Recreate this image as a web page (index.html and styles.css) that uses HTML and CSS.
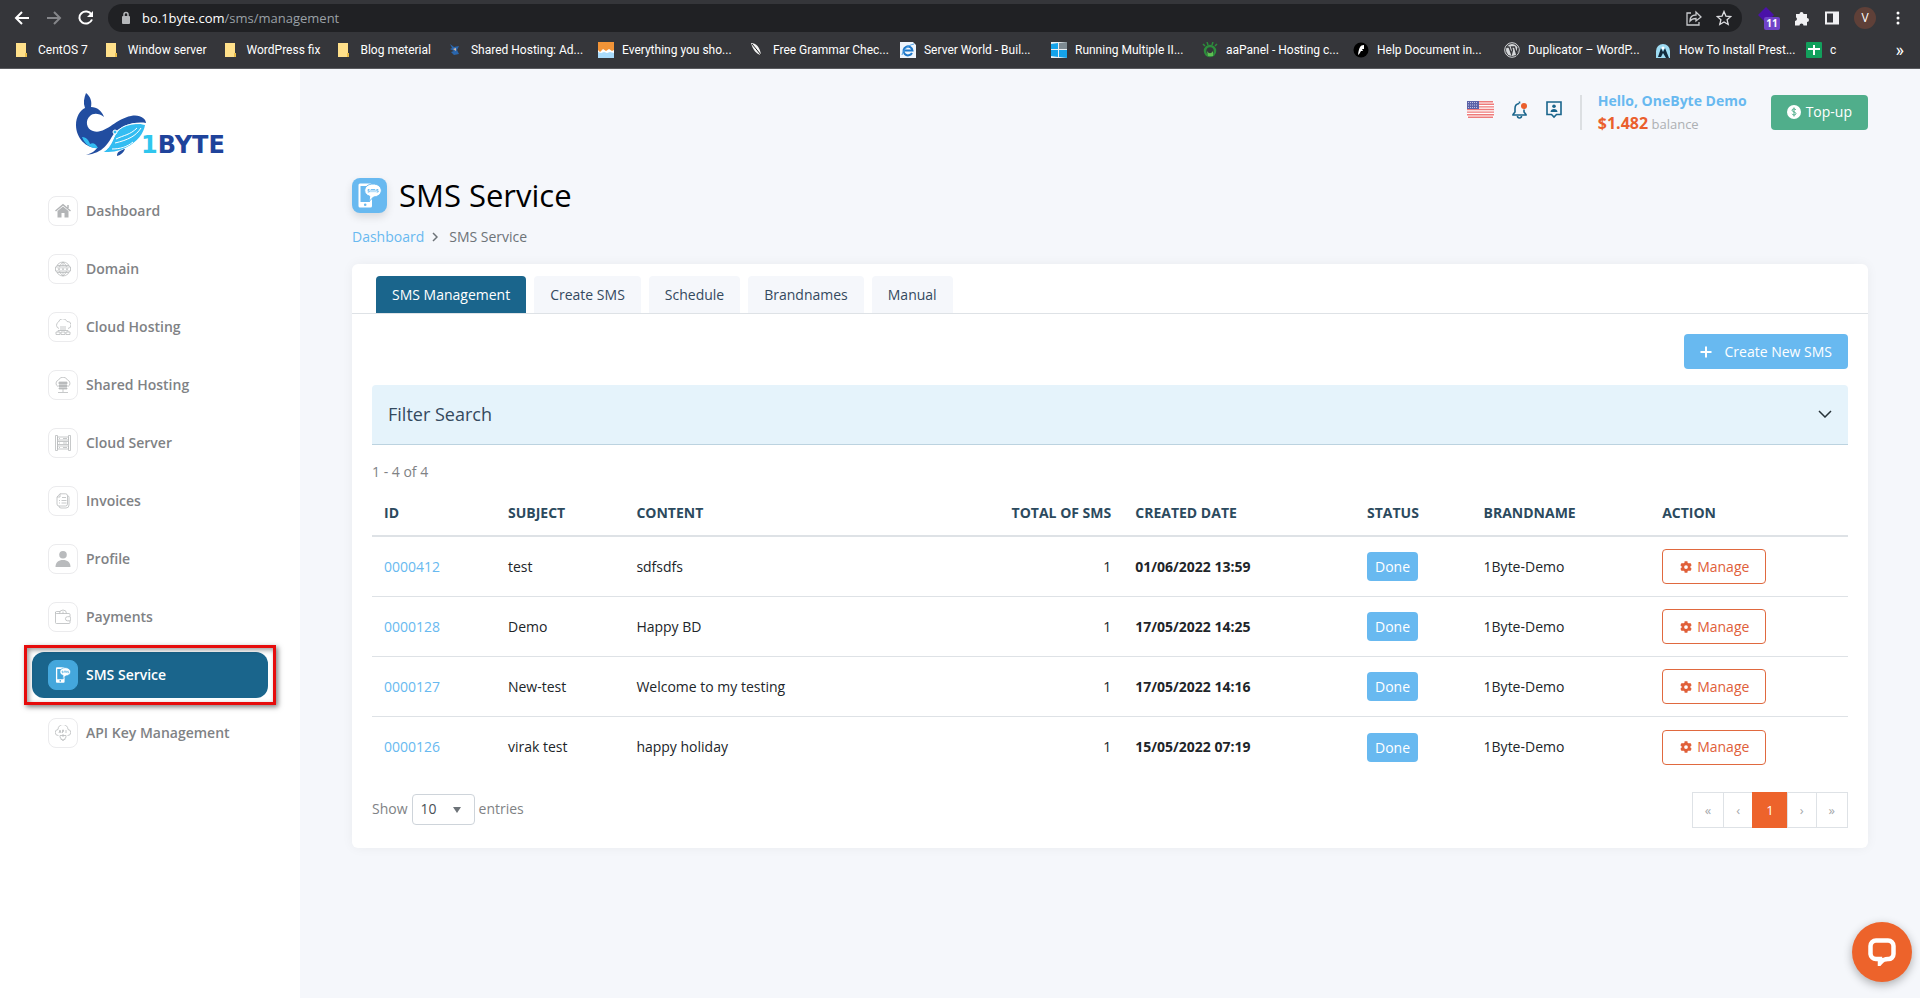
FILE: index.html
```html
<!DOCTYPE html>
<html lang="en">
<head>
    <meta charset="UTF-8">
    <meta name="viewport" content="width=device-width, initial-scale=1.0">
    <title>SMS Service</title>
    <link rel="stylesheet" href="styles.css">
</head>
<body>
    <!-- shared icons -->
    <svg class="sprite" aria-hidden="true">
        <symbol id="folder" viewBox="0 0 16 16"><path d="M2 1h10v10l1 1v3H2z" fill="#ffe08a"/><path d="M11 11h2v4h-2z" fill="#e9bd4a"/></symbol>
        <symbol id="gear" viewBox="0 0 512 512"><path fill="currentColor" d="M487 315l-42-25c4-23 4-46 0-69l42-25c5-3 7-8 6-14-11-35-30-67-55-94-4-4-10-5-14-2l-43 24c-18-15-39-27-61-35V27c0-6-4-11-9-12-36-8-73-8-109 0-5 1-9 6-9 12v48c-22 8-43 20-61 35L89 86c-5-3-11-2-14 2-25 27-44 59-55 94-2 5 0 11 5 14l43 25c-4 23-4 46 0 69l-43 25c-5 3-7 8-5 14 11 35 30 67 55 94 4 4 10 5 14 2l43-24c18 15 39 27 61 35v48c0 6 4 11 9 12 36 8 73 8 109 0 5-1 9-6 9-12v-48c22-8 43-20 61-35l43 24c5 3 11 2 14-2 25-27 44-59 55-94 1-6-1-11-6-14zM256 336a80 80 0 1 1 0-160 80 80 0 0 1 0 160z"/></symbol>
        <symbol id="sms" viewBox="0 0 25 25">
            <path fill="#fff" fill-rule="evenodd" d="M3 .5h10.500a1.500 1.500 0 0 1 1.500 1.500v21a1.500 1.500 0 0 1-1.500 1.500H3A1.500 1.500 0 0 1 1.500 23V2A1.500 1.500 0 0 1 3 .5zM3.500 3v16H13V3zM8.200 20.500a1.300 1.300 0 1 0 0 2.600 1.300 1.300 0 0 0 0-2.600z"/>
            <path fill="#fff" stroke="currentColor" d="M16 1c4.700 0 8.300 2.700 8.300 6.500S21 13.700 16.500 14L12 18.500l.7-5.300C9.500 12.300 7.700 10.300 7.700 7.500 7.700 3.700 11.300 1 16 1z"/>
            <path fill="none" stroke="currentColor" stroke-width=".9" d="M12.500 6.500H11v1.300h1.300V9H10.700M14 9.200V6.500h4v2.700M16 6.500v2.700M21.300 6.500h-1.600v1.300h1.500V9h-1.700"/>
        </symbol>
    </svg>

    <header class="browser">
        <div class="toolbar">
            <div class="history">
                <button class="tool" aria-label="Back"><svg viewBox="0 0 16 16" width="16" height="16"><path d="M15 8H2M8 2L2 8l6 6" fill="none" stroke="#fff" stroke-width="2"/></svg></button>
                <button class="tool" aria-label="Forward"><svg viewBox="0 0 16 16" width="16" height="16"><path d="M1 8h13M8 2l6 6-6 6" fill="none" stroke="#85868a" stroke-width="2"/></svg></button>
                <button class="tool" aria-label="Reload"><svg viewBox="0 0 16 16" width="16" height="16"><path d="M13.500 4.500A6.500 6 0 1 0 14 9.500" fill="none" stroke="#fff" stroke-width="2"/><path d="M15 1v6H9z" fill="#fff"/></svg></button>
            </div>
            <div class="address">
                <svg viewBox="0 0 12 14" width="12" height="14"><rect x="2" y="5" width="8" height="8" rx="1" fill="#b5b7ba"/><path d="M4 6V3.500a2 2 0 0 1 4 0V6" fill="none" stroke="#b5b7ba" stroke-width="1.500"/></svg>
                <span class="url">bo.1byte.com<span>/sms/management</span></span>
                <button class="tool" aria-label="Share"><svg viewBox="0 0 16 16" width="16" height="16"><path d="M5 3H1v12h12v-3M4 11c0-4 2-6 6-6V2l5 5-5 4V8.500C7 8.500 5.500 9 4 11z" fill="none" stroke="#c9cbce" stroke-width="1.300"/></svg></button>
                <button class="tool" aria-label="Bookmark"><svg viewBox="0 0 16 16" width="16" height="16"><path d="M8 1.500l1.900 4.600 4.900.4-3.700 3.200 1.100 4.800L8 12l-4.200 2.500 1.100-4.800L1.200 6.500l4.900-.4z" fill="none" stroke="#dcdde0" stroke-width="1.300"/></svg></button>
            </div>
            <button class="tool" aria-label="Extension"><svg viewBox="0 0 24 24" width="24" height="24"><path d="M10 1l8 8-8 8-8-8z" fill="#4a11a8"/><rect x="8" y="11" width="16" height="13" rx="2" fill="#7043c8"/><text x="16" y="21" class="ext-count">11</text></svg></button>
            <button class="tool" aria-label="Extensions"><svg viewBox="0 0 16 16" width="16" height="16"><path d="M2 4h3.500a2 2 0 1 1 4 0H13v4a2 2 0 1 1 0 4v3.500H9.500a2 2 0 0 0-4 0H1V11a2 2 0 0 0 1-3.700z" fill="#f1f1f3"/></svg></button>
            <button class="tool" aria-label="Side panel"><svg viewBox="0 0 16 16" width="16" height="16"><path d="M1 1.500h14v13H1zM3 3.500v9h6v-9z" fill="#f1f1f3" fill-rule="evenodd"/></svg></button>
            <button class="avatar" aria-label="Account">V</button>
            <button class="tool" aria-label="Menu"><svg viewBox="0 0 16 16" width="16" height="16" fill="#fff"><circle cx="8" cy="3" r="1.500"/><circle cx="8" cy="8" r="1.500"/><circle cx="8" cy="13" r="1.500"/></svg></button>
        </div>
        <nav class="bookmarks">
            <a href="#"><svg><use href="#folder"/></svg>CentOS 7</a>
            <a href="#"><svg><use href="#folder"/></svg>Window server</a>
            <a href="#"><svg><use href="#folder"/></svg>WordPress fix</a>
            <a href="#"><svg><use href="#folder"/></svg>Blog meterial</a>
            <a href="#" class="long"><svg viewBox="0 0 16 16"><path d="M3 2l4 3 5-1-2 4 2 4-5 1-3-3 3-1-4-2 2-1z" fill="#2a66ad"/><path d="M6 7l3-1v3z" fill="#d9b9a0"/></svg>Shared Hosting: Ad...</a>
            <a href="#" class="long"><svg viewBox="0 0 16 16"><path d="M0 0h16v16H0z" fill="#f29437"/><path d="M0 8l2 2 3-3 3 2 3-2 3 2 2-1v8H0z" fill="#fff"/><path d="M0 10l3 1 3-1 3 1 3-1 4 1v5H0z" fill="#a9dbfb"/></svg>Everything you sho...</a>
            <a href="#" class="long"><svg viewBox="0 0 16 16"><path d="M2 1c5 0 9 4 10 12C7 12 4 8 2 1z" fill="#f4f4f4"/><path d="M3 2l9 11" stroke="#222" fill="none"/></svg>Free Grammar Chec...</a>
            <a href="#" class="long"><svg viewBox="0 0 16 16"><path d="M0 0h13l3 3v13H0z" fill="#eef4fb"/><path d="M12 11A4.500 4.500 0 1 1 12.500 8.500H4" fill="none" stroke="#1e77c8" stroke-width="2"/><path d="M2 13C3 8 8 3 14 2" fill="none" stroke="#4b9fe6"/></svg>Server World - Buil...</a>
            <a href="#" class="long"><svg viewBox="0 0 16 16"><path d="M0 0h16v16H0z" fill="#e9eef2"/><path d="M0 2l7-1v6H0zM8 8h8v8l-8-1zM0 8h7v7l-7-1z" fill="#15a3ea"/><path d="M8 1l8-1v7H8z" fill="#7d8a92"/></svg>Running Multiple II...</a>
            <a href="#" class="long"><svg viewBox="0 0 16 16"><circle cx="8" cy="9" r="5" fill="none" stroke="#2d8d3c" stroke-width="2.500"/><path d="M3 4L1 2M6 3L5 0M10 3l1-3M13 4l2-2" stroke="#2d8d3c" stroke-width="1.500"/><path d="M5 9c2 3 4 3 6 0v5H6z" fill="#5fbf52"/></svg>aaPanel - Hosting c...</a>
            <a href="#" class="long"><svg viewBox="0 0 16 16"><circle cx="8" cy="8" r="7.500" fill="#000"/><path d="M11 3C7 3 6 6 5 13c2-1 2-3 3-4h2l-1-2h2z" fill="#fff"/></svg>Help Document in...</a>
            <a href="#" class="long"><svg viewBox="0 0 16 16"><circle cx="8" cy="8" r="7.300" fill="none" stroke="#d5d7d9"/><circle cx="8" cy="8" r="6" fill="#d5d7d9"/><path d="M2 5h3l2.500 7L8.500 8 7.500 5h3l2 7L14 6" fill="none" stroke="#35363a" stroke-width="1.300"/></svg>Duplicator – WordP...</a>
            <a href="#" class="long"><svg viewBox="0 0 16 16"><path d="M1 16V9a7 7 0 0 1 14 0v7z" fill="#9edcf3"/><path d="M3 15l3-9 2 4 2-4 4 10h-3l-3-5-2 4z" fill="#112a3c"/><circle cx="8" cy="6" r="1.500" fill="#fff"/></svg>How To Install Prest...</a>
            <a href="#"><svg viewBox="0 0 16 16"><rect width="16" height="16" rx="1" fill="#12a05c"/><path d="M7 3h2v3h5v2H9v5H7V8H2V6h5z" fill="#fff"/></svg>c</a>
            <button class="more" aria-label="More bookmarks">»</button>
        </nav>
    </header>

    <div class="layout">
        <aside class="sidebar">
            <a href="#" class="logo" aria-label="1Byte">
                <svg viewBox="0 0 156 68" width="156" height="68">
                    <path fill="#214da0" d="M10 0c5 4 6 9 5 14 6 0 11 4 13 10-5-4-11-4-14-1-5 4-4 13 3 15 12 4 22-12 38-15 9-2 15 3 15 7-12-2-27 3-33 12-5 8-9 18-27 20 6-2 9-4 11-7C10 55 0 45 0 32c0-8 4-15 9-17C7 10 8 5 10 0z"/>
                    <path fill="#33bdf2" d="M69 32c-1 8-8 17-18 22-9 5-17 5-24 5 9-5 10-14 13-19 6-9 19-11 29-8zM6 44c5 0 7 4 8 7 3-2 6 0 8 4-6 1-13-3-16-11z"/>
                    <path fill="#214da0" d="M48 56c-3 2-7 2-7 7 4-1 7-4 8-7z"/>
                    <path fill="none" stroke="#fff" stroke-width="1" d="M70 31c-14-2-27 2-31 11-3 6-5 13-12 17M65 35c-5 8-13 12-26 15M61 35c-7 7-13 7-21 11M57 49c-6 5-13 7-21 7"/>
                    <circle cx="39" cy="39" r="2" fill="#33bdf2" stroke="#fff"/>
                    <text x="65" y="60" class="logo-text"><tspan class="one">1</tspan>BYTE</text>
                </svg>
            </a>
            <nav class="menu">
                <a href="#"><span class="menu-icon"><svg viewBox="0 0 16 16"><path d="M8 3.500L2.500 8v6.500h4V10h3v4.500h4V8z" fill="#b3b5b7"/><path d="M.5 8L8 1.700 15.500 8M13 5V2" fill="none" stroke="#b3b5b7" stroke-width="1.500"/></svg></span>Dashboard</a>
                <a href="#"><span class="menu-icon"><svg viewBox="0 0 16 16" class="line"><circle cx="8" cy="8" r="7"/><path d="M8 1C3 5 3 11 8 15M8 1c5 4 5 10 0 14M8 1v4M8 11v4M2 4.500h12M2 11.500h12"/><path d="M.5 6h15v4H.5z" fill="#fff"/><path d="M3 7l1 2 1-2M7 7l1 2 1-2M11 7l1 2 1-2"/></svg></span>Domain</a>
                <a href="#"><span class="menu-icon"><svg viewBox="0 0 16 16" class="line"><path d="M4 9.500a3.500 3.500 0 0 1-.5-6.500 4.500 4.500 0 0 1 8.500-.5 3.500 3.500 0 0 1 1 7M6 7v5M8 7v5M10 7v5M3 13v-1.500h10V13"/><path d="M1 13h4v2.500H1zM6 13h4v2.500H6zM11 13h4v2.500h-4z"/></svg></span>Cloud Hosting</a>
                <a href="#"><span class="menu-icon"><svg viewBox="0 0 16 16" class="line"><path d="M3 9.500a3.500 3.500 0 0 1 .5-6.500 5 5 0 0 1 9 0 3.500 3.500 0 0 1 .5 6.500"/><path d="M4 5h8v2H4zM4 8h8v2H4zM4 11h8v1H4z" fill="#b9bbbd"/><path d="M8 12v3M3 15.500h10"/></svg></span>Shared Hosting</a>
                <a href="#"><span class="menu-icon"><svg viewBox="0 0 16 16" class="line"><path d="M.5.5h2v15h-2zM13.500.5h2v15h-2z"/><path d="M2.500 2h11v3h-11zM2.500 6.500h11v3h-11zM2.500 11h11v3h-11zM4 3.500h1M8 3.500h4M4 8h1M8 8h4M4 12.500h1M8 12.500h4"/></svg></span>Cloud Server</a>
                <a href="#"><span class="menu-icon"><svg viewBox="0 0 16 16" class="line"><path d="M5 .8h5.500a2 2 0 0 1 2 2V11a2 2 0 0 1-2 2H4a2 2 0 0 1-2-2V4zM5 .8V4H2M12.500 2.500a2 2 0 0 1 1.500 2V12a3 3 0 0 1-3 3H6a2 2 0 0 1-2-2M7 4.500h4M6.500 7.500h5M6.500 10h5M4 7.500h1M4 10h1"/></svg></span>Invoices</a>
                <a href="#"><span class="menu-icon"><svg viewBox="0 0 16 16" fill="#b9bbbd"><circle cx="8" cy="3.800" r="3.800"/><path d="M.5 16c0-4.500 3-7 7.500-7s7.500 2.500 7.500 7z"/></svg></span>Profile</a>
                <a href="#"><span class="menu-icon"><svg viewBox="0 0 16 16" class="line"><path d="M15 7.500V5.500a1 1 0 0 0-1-1H1.500a1 1 0 0 1 0-2H5M.5 3v10.500a1 1 0 0 0 1 1H14a1 1 0 0 0 1-1V12"/><path d="M12.500 7.700H15a1 1 0 0 1 .7 1V11a1 1 0 0 1-.7.800h-2.500a2 2 0 0 1 0-4.100zM4.500 4.500a3.500 3.500 0 0 1 7 0M8 2.500v2"/></svg></span>Payments</a>
                <a href="#" class="active"><span class="menu-icon"><svg><use href="#sms"/></svg></span>SMS Service</a>
                <a href="#"><span class="menu-icon"><svg viewBox="0 0 16 16" class="line"><path d="M3.500 10.500a3 3 0 0 1-.5-6 5 5 0 0 1 10 0 3 3 0 0 1-.5 6"/><path d="M4 8l1-3 1 3M4.500 7h1M7.500 8V5h1v1.500h-1M11 5v3"/><path d="M5 10.500h6v2l-1 .5v1.500H8.500v1h-1v-1H6V13l-1-.5zM8 9v3"/></svg></span>API Key Management</a>
            </nav>
        </aside>

        <main class="main">
            <div class="topbar">
                <button class="icon-btn flag" aria-label="Language">
                    <svg viewBox="0 0 27 17" width="27" height="17"><rect width="27" height="17" rx="2" fill="#fff"/><path d="M1 .7h25M0 3.300h27M0 5.900h27M0 8.500h27M0 11.100h27M0 13.700h27M1 16.300h25" stroke="#ee7b7b" stroke-width="1.400"/><path d="M0 0h12v8H0z" fill="#5a62a8"/><path d="M1 1.500h10M1 4h10M1 6.500h10" stroke="#c3c6e2" stroke-dasharray="1 1"/></svg>
                </button>
                <button class="icon-btn" aria-label="Notifications">
                    <svg viewBox="0 0 16 18" width="16" height="18"><path d="M7 2.500c-3 .5-4 2.500-4 5V11l-2 2.500v.5h13v-.5L12 11V8.500M5.500 15a2 2 0 0 0 4 0M7.500.5v2" fill="none" stroke="#1a658c" stroke-width="1.600"/><circle cx="12" cy="5" r="3" fill="#ea5f2d"/></svg>
                </button>
                <button class="icon-btn" aria-label="Contact">
                    <svg viewBox="0 0 16 18" width="16" height="18"><path d="M1 1h14v12.500h-4.500L8 16l-2.500-2.500H1z" fill="none" stroke="#1a658c" stroke-width="1.600"/><circle cx="8" cy="5.300" r="1.800" fill="#1a658c"/><path d="M4.500 11c0-4 7-4 7 0z" fill="#1a658c"/></svg>
                </button>
                <span class="divider"></span>
                <div class="account">
                    <a href="#" class="hello">Hello, OneByte Demo</a>
                    <div><strong>$1.482</strong> <span>balance</span></div>
                </div>
                <button class="btn topup"><svg viewBox="0 0 14 14" width="14" height="14"><circle cx="7" cy="7" r="7" fill="#fff"/><path d="M9 5c-.5-1.500-4-1.500-4 .2C5 7.200 9 6.600 9 8.700c0 1.700-3.600 1.700-4 .1M7 2.500v9" fill="none" stroke="#50ae8b"/></svg>Top-up</button>
            </div>

            <div class="page-title">
                <span class="title-icon"><svg><use href="#sms"/></svg></span>
                <h1>SMS Service</h1>
            </div>
            <nav class="breadcrumb">
                <a href="#">Dashboard</a>
                <svg viewBox="0 0 6 10" width="6" height="10"><path d="M1 1l4 4-4 4" fill="none" stroke="#6d7378" stroke-width="1.500"/></svg>
                <span>SMS Service</span>
            </nav>

            <section class="card">
                <nav class="tabs">
                    <a href="#" class="active">SMS Management</a>
                    <a href="#">Create SMS</a>
                    <a href="#">Schedule</a>
                    <a href="#">Brandnames</a>
                    <a href="#">Manual</a>
                </nav>
                <div class="card-body">
                    <div class="actions">
                        <button class="btn create"><svg viewBox="0 0 12 12" width="12" height="12"><path d="M6 .5v11M.5 6h11" stroke="#fff" stroke-width="2"/></svg>Create New SMS</button>
                    </div>
                    <button class="filter">Filter Search
                        <svg viewBox="0 0 14 8" width="14" height="8"><path d="M1 1l6 6 6-6" fill="none" stroke="#263238" stroke-width="1.500"/></svg>
                    </button>
                    <p class="count">1 - 4 of 4</p>
                    <table>
                        <thead>
                            <tr>
                                <th class="col-id">ID</th>
                                <th class="col-subject">SUBJECT</th>
                                <th class="col-content">CONTENT</th>
                                <th class="col-total">TOTAL OF SMS</th>
                                <th class="col-date">CREATED DATE</th>
                                <th class="col-status">STATUS</th>
                                <th class="col-brand">BRANDNAME</th>
                                <th class="col-action">ACTION</th>
                            </tr>
                        </thead>
                        <tbody>
                            <tr>
                                <td><a href="#">0000412</a></td><td>test</td><td>sdfsdfs</td>
                                <td class="col-total">1</td><td class="date">01/06/2022 13:59</td>
                                <td><span class="badge">Done</span></td><td>1Byte-Demo</td>
                                <td><button class="btn manage"><svg><use href="#gear"/></svg>Manage</button></td>
                            </tr>
                            <tr>
                                <td><a href="#">0000128</a></td><td>Demo</td><td>Happy BD</td>
                                <td class="col-total">1</td><td class="date">17/05/2022 14:25</td>
                                <td><span class="badge">Done</span></td><td>1Byte-Demo</td>
                                <td><button class="btn manage"><svg><use href="#gear"/></svg>Manage</button></td>
                            </tr>
                            <tr>
                                <td><a href="#">0000127</a></td><td>New-test</td><td>Welcome to my testing</td>
                                <td class="col-total">1</td><td class="date">17/05/2022 14:16</td>
                                <td><span class="badge">Done</span></td><td>1Byte-Demo</td>
                                <td><button class="btn manage"><svg><use href="#gear"/></svg>Manage</button></td>
                            </tr>
                            <tr>
                                <td><a href="#">0000126</a></td><td>virak test</td><td>happy holiday</td>
                                <td class="col-total">1</td><td class="date">15/05/2022 07:19</td>
                                <td><span class="badge">Done</span></td><td>1Byte-Demo</td>
                                <td><button class="btn manage"><svg><use href="#gear"/></svg>Manage</button></td>
                            </tr>
                        </tbody>
                    </table>
                    <div class="table-footer">
                        <div class="entries">
                            <label for="perPage">Show</label>
                            <span class="select"><select id="perPage"><option>10</option><option>25</option><option>50</option></select></span>
                            <span>entries</span>
                        </div>
                        <nav class="pagination">
                            <a href="#">«</a>
                            <a href="#">‹</a>
                            <a href="#" class="active">1</a>
                            <a href="#">›</a>
                            <a href="#">»</a>
                        </nav>
                    </div>
                </div>
            </section>
        </main>
    </div>

    <button class="chat" aria-label="Chat">
        <svg viewBox="0 0 28 28" width="28" height="28"><path d="M8 2.500h12a5.500 5.500 0 0 1 5.500 5.500v8a5 5 0 0 1-5.500 5c-3.500 0-5 .5-8 4V21H8a5.500 5.500 0 0 1-5.500-5V8A5.500 5.500 0 0 1 8 2.500z" fill="none" stroke="#fff" stroke-width="4.500"/></svg>
    </button>
</body>
</html>
```
FILE: styles.css
```css
* {
    box-sizing: border-box;
}
body {
    margin: 0;
    min-height: 100vh;
    display: flex;
    flex-direction: column;
    font-family: "Open Sans", "Noto Sans", sans-serif;
    font-size: 14px;
    line-height: 20px;
    color: #212529;
    background-color: #f5f7fb;
}
a {
    color: #68b9f0;
    text-decoration: none;
}
button {
    font: inherit;
    padding: 0;
    border: none;
    background: none;
    cursor: pointer;
}
svg {
    display: block;
    flex-shrink: 0;
}
.sprite {
    position: absolute;
    width: 0;
    height: 0;
}

/* browser bar */
.browser {
    background-color: #35363a;
    border-bottom: 1px solid #5a5b5f;
    color: #fff;
}
.toolbar {
    display: flex;
    align-items: center;
    gap: 14px;
    height: 36px;
    padding: 0 14px;
}
.history {
    display: flex;
    gap: 16px;
}
.tool {
    min-width: 16px;
}
.address {
    flex: 1;
    display: flex;
    align-items: center;
    gap: 14px;
    height: 28px;
    padding: 0 10px 0 12px;
    border-radius: 14px;
    background-color: #202124;
}
.address > svg {
    margin-right: -4px;
}
.url {
    flex: 1;
    font-size: 13px;
}
.url span {
    color: #9aa0a6;
}
.ext-count {
    font: 700 10px "Open Sans", sans-serif;
    fill: #fff;
    text-anchor: middle;
}
.avatar {
    width: 22px;
    height: 22px;
    border-radius: 50%;
    background-color: #5f4038;
    color: #fff;
    font-size: 12px;
}
.bookmarks {
    display: flex;
    align-items: center;
    gap: 16px;
    height: 32px;
    padding: 0 16px 4px 14px;
    font-family: Roboto, "Open Sans", sans-serif;
    font-size: 12px;
}
.bookmarks a {
    display: flex;
    align-items: center;
    gap: 8px;
    color: #fff;
    white-space: nowrap;
}
.bookmarks svg {
    width: 16px;
    height: 16px;
}
.bookmarks .long {
    width: 135px;
}
.more {
    margin-left: auto;
    color: #fff;
    font-size: 18px;
}

/* sidebar */
.layout {
    flex: 1;
    display: flex;
}
.sidebar {
    width: 300px;
    padding: 24px 32px;
    background-color: #fff;
}
.logo {
    display: block;
    margin: 0 0 27px 44px;
}
.logo-text {
    font: 700 24px "DejaVu Sans", sans-serif;
    fill: #1f439b;
}
.logo-text .one {
    fill: #2fc6ee;
}
.menu {
    display: flex;
    flex-direction: column;
    gap: 12px;
}
.menu a {
    position: relative;
    display: flex;
    align-items: center;
    gap: 8px;
    height: 46px;
    padding: 0 16px;
    border-radius: 12px;
    color: #808285;
    font-weight: 600;
}
.menu-icon {
    display: flex;
    align-items: center;
    justify-content: center;
    width: 30px;
    height: 30px;
    border: 1px solid #ebebed;
    border-radius: 8px;
}
.menu-icon svg {
    width: 16px;
    height: 16px;
}
.line {
    fill: none;
    stroke: #b9bbbd;
    stroke-width: 0.8;
}
.menu .active {
    background-color: #1a658c;
    color: #fff;
}
.active .menu-icon {
    border-color: #44a7dc;
    background-color: #44a7dc;
    color: #44a7dc;
}
.menu .active::after {
    content: "";
    position: absolute;
    inset: -7px -8px;
    border: 3px solid #e60c0c;
    box-shadow: 2px 2px 5px rgba(0, 0, 0, 0.5), inset 2px 2px 5px rgba(0, 0, 0, 0.4);
}

/* content */
.main {
    flex: 1;
    min-width: 0;
    padding: 21px 52px;
}
.topbar {
    display: flex;
    align-items: center;
    justify-content: flex-end;
    height: 44px;
}
.icon-btn {
    margin-right: 18px;
}
.icon-btn svg {
    margin-bottom: 5px;
}
.divider {
    width: 2px;
    height: 35px;
    background-color: #dcdfe2;
}
.account {
    margin: 0 24px 0 16px;
    line-height: 22px;
    font-size: 13px;
    color: #adb0b3;
}
.hello {
    font-size: 14px;
    font-weight: 700;
}
.account strong {
    font-size: 16px;
    color: #ea5f2d;
}
.btn {
    display: inline-flex;
    align-items: center;
    height: 35px;
    padding: 0 16px;
    border-radius: 4px;
    color: #fff;
}
.topup {
    gap: 5px;
    background-color: #50ae8b;
}
.page-title {
    display: flex;
    align-items: center;
    gap: 12px;
    margin-top: 41px;
}
.title-icon {
    display: flex;
    align-items: center;
    justify-content: center;
    width: 35px;
    height: 35px;
    border-radius: 8px;
    background-color: #68b9f0;
    color: #68b9f0;
    box-shadow: 0 4px 8px rgba(0, 0, 0, 0.12);
}
.title-icon svg {
    width: 25px;
    height: 25px;
}
h1 {
    margin: 0;
    font-size: 31px;
    font-weight: 500;
    line-height: 40px;
    color: #000;
}
.breadcrumb {
    display: flex;
    align-items: center;
    gap: 8px;
    margin: 12px 0 17px;
    color: #6d7378;
}
.breadcrumb span {
    margin-left: 3px;
}
.card {
    border-radius: 6px;
    background-color: #fff;
    box-shadow: 0 0 12px rgba(0, 0, 0, 0.05);
}
.tabs {
    display: flex;
    gap: 8px;
    padding: 12px 24px 0;
    border-bottom: 1px solid #dee2e6;
}
.tabs a {
    padding: 9px 16px 8px;
    border-radius: 4px 4px 0 0;
    background-color: #f5f7fb;
    color: #34495e;
}
.tabs .active {
    background-color: #1a658c;
    color: #fff;
}
.card-body {
    padding: 20px;
}
.actions {
    display: flex;
    justify-content: flex-end;
    margin-bottom: 16px;
}
.create {
    gap: 12px;
    background-color: #68b9f0;
}
.filter {
    display: flex;
    align-items: center;
    justify-content: space-between;
    width: 100%;
    height: 60px;
    padding: 0 16px 2px;
    border-bottom: 1px solid #bcd3e0;
    border-radius: 4px 4px 0 0;
    background-color: #e5f3fb;
    color: #34495e;
    font-size: 18px;
}
.count {
    margin: 17px 0;
    color: #808285;
}
table {
    width: 100%;
    table-layout: fixed;
    border-collapse: separate;
    border-spacing: 0;
}
th,
td {
    padding: 0 12px;
    border-bottom: 1px solid #dee2e6;
    text-align: left;
}
th {
    height: 38px;
    padding-bottom: 8px;
    border-bottom-width: 2px;
    color: #2c4a5e;
    white-space: nowrap;
}
td {
    height: 60px;
}
tbody tr:last-child td {
    border-bottom: none;
}
.col-id {
    width: 8.4%;
}
.col-subject {
    width: 8.7%;
}
.col-content {
    width: 25%;
}
.col-total {
    width: 8.8%;
    text-align: right;
}
.col-date {
    width: 15.7%;
}
.col-status {
    width: 7.9%;
}
.col-brand {
    width: 12.1%;
}
.date {
    font-weight: 700;
}
.badge {
    display: inline-block;
    padding: 5px 8px 4px;
    border-radius: 4px;
    background-color: #68b9f0;
    color: #fff;
}
.manage {
    gap: 4px;
    border: 1px solid #e0693f;
    color: #e0603a;
}
.manage svg {
    width: 14px;
    height: 14px;
    padding: 1px;
}
.table-footer {
    display: flex;
    align-items: center;
    justify-content: space-between;
    margin-top: 15px;
    color: #808285;
}
.entries {
    display: flex;
    align-items: center;
    gap: 4px;
    padding-bottom: 2px;
}
.select {
    position: relative;
}
.select select {
    appearance: none;
    width: 63px;
    height: 31px;
    padding: 0 8px;
    border: 1px solid #ced4da;
    border-radius: 4px;
    background-color: #fff;
    color: #495057;
    font: inherit;
}
.select::after {
    content: "";
    position: absolute;
    right: 14px;
    top: 13px;
    border: 4px solid transparent;
    border-top: 6px solid #6d7378;
    pointer-events: none;
}
.pagination {
    display: flex;
    border: 1px solid #dee2e6;
}
.pagination a {
    padding: 7px 12px;
    border-left: 1px solid #dee2e6;
    color: #a5a8ab;
    font-size: 13px;
}
.pagination a:first-child {
    border-left: none;
}
.pagination .active {
    margin: -1px 0;
    padding: 8px 13px;
    border-color: #ed632b;
    background-color: #ed632b;
    color: #fff;
}
.chat {
    position: fixed;
    right: 8px;
    bottom: 16px;
    display: flex;
    align-items: center;
    justify-content: center;
    width: 60px;
    height: 60px;
    border-radius: 50%;
    background-color: #ed632b;
    box-shadow: 0 3px 10px rgba(0, 0, 0, 0.3);
}
```
